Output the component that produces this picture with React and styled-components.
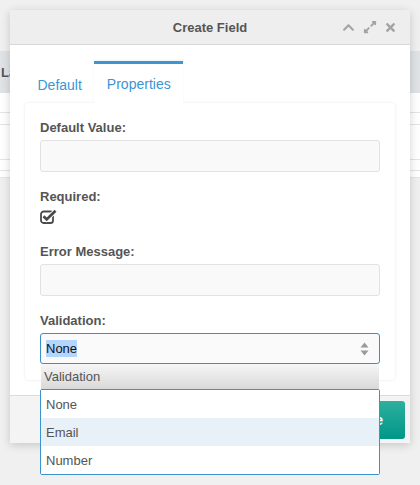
import React from 'react';
import styled, { createGlobalStyle } from 'styled-components';
import { FaChevronUp, FaExpandAlt, FaTimes } from 'react-icons/fa';

const Global = createGlobalStyle`
  html, body { margin: 0; padding: 0; background: #f0f0f0; }
  body { font-family: "Liberation Sans", Arial, Helvetica, sans-serif; color: #555; }
  #root { position: relative; width: 420px; height: 485px; overflow: hidden; }
`;

const Page = styled.div`
  padding-top: 51px;
`;

const Table = styled.div`
  width: 100%;
  background: #fff;
`;

const TableHead = styled.div`
  height: 42px;
  display: flex;
  align-items: center;
  padding-left: 1px;
  background: #dfe3e6;
  font-size: 13px;
  font-weight: bold;
  color: #555;
`;

const TableRow = styled.div`
  height: ${(p) => p.$h}px;
  border-bottom: 1px solid #e4e4e4;
  background: #fff;
`;

const Modal = styled.div`
  position: absolute;
  top: 10px;
  left: 10px;
  width: 400px;
  background: #fff;
  box-shadow: 0 2px 10px rgba(0, 0, 0, 0.18);
  border-radius: 2px;
`;

const Header = styled.div`
  height: 34px;
  display: grid;
  grid-template-columns: 1fr auto 1fr;
  align-items: center;
  background: #eeeeee;
  border-bottom: 1px solid #d8d8d8;
`;

const Title = styled.div`
  grid-column: 2;
  font-size: 13px;
  font-weight: bold;
  color: #555;
`;

const Controls = styled.div`
  grid-column: 3;
  justify-self: end;
  display: flex;
  align-items: center;
  padding-right: 9px;
`;

const IconBtn = styled.span`
  width: 21px;
  height: 20px;
  display: flex;
  align-items: center;
  justify-content: center;
  color: #a3a3a3;
`;

const Body = styled.div`
  padding: 16px 15px 15px;
`;

const Tabs = styled.div`
  display: flex;
  height: 42px;
  position: relative;
  z-index: 1;
`;

const Tab = styled.div`
  padding: ${(p) => (p.$active ? '0' : '2px')} 12.5px 0;
  display: flex;
  align-items: center;
  font-size: 14px;
  color: #3b96d2;
  border-top: 3px solid ${(p) => (p.$active ? '#3b96d2' : 'transparent')};
  background: ${(p) => (p.$active ? '#fff' : 'transparent')};
  box-shadow: ${(p) => (p.$active ? '0 -1px 2px rgba(0,0,0,0.06)' : 'none')};
`;

const Panel = styled.div`
  background: #fff;
  border-radius: 4px;
  box-shadow: 0 0 3px rgba(0, 0, 0, 0.1);
  padding: 16px 15px 16px;
`;

const Label = styled.div`
  height: 18px;
  line-height: 18px;
  font-size: 13px;
  font-weight: bold;
  color: #555;
  margin-bottom: ${(p) => (p.$tight ? 0 : 3)}px;
`;

const Input = styled.div`
  height: 32px;
  box-sizing: border-box;
  background: #f9f9f9;
  border: 1px solid #e2e2e2;
  border-radius: 3px;
  margin-bottom: 16px;
`;

const CheckRow = styled.div`
  height: 21px;
  display: flex;
  align-items: center;
  margin-bottom: 16px;
`;

const SelectWrap = styled.div`
  position: relative;
`;

const Select = styled.div`
  height: 31px;
  box-sizing: border-box;
  border: 1px solid #3c8ec8;
  border-radius: 3px;
  background: #fafafa;
  display: flex;
  align-items: center;
  justify-content: space-between;
  padding: 0 10px 0 5px;
  font-size: 13px;
  color: #111;
`;

const Selected = styled.span`
  background: #b4d6fd;
  padding: 1px 0;
`;

const DropHead = styled.div`
  position: absolute;
  top: 31px;
  left: 1px;
  right: 1px;
  height: 25px;
  box-sizing: border-box;
  padding-left: 3px;
  display: flex;
  align-items: center;
  font-size: 13px;
  color: #555;
  background: linear-gradient(#f6f6f6, #d9d9d9);
  z-index: 3;
`;

const DropList = styled.div`
  position: absolute;
  top: 56px;
  left: 0;
  right: 0;
  border: 1px solid #3c93cc;
  border-radius: 2px;
  background: #fff;
  z-index: 3;
`;

const Option = styled.div`
  height: 28px;
  display: flex;
  align-items: center;
  padding-left: 5px;
  font-size: 13px;
  color: #555;
  background: ${(p) => (p.$hover ? '#e8f0f8' : '#fff')};
`;

const Footer = styled.div`
  height: 48px;
  box-sizing: border-box;
  border-top: 1px solid #dcdcdc;
  background: #f4f4f4;
  display: flex;
  justify-content: flex-end;
  align-items: center;
  padding: 0 5px;
`;

const Button = styled.div`
  height: 38px;
  padding: 0 22px;
  display: flex;
  align-items: center;
  border-radius: 3px;
  background: linear-gradient(#2db09c, #00968a);
  color: #fff;
  font-size: 14px;
  font-weight: bold;
`;

const CheckIcon = () => (
  <svg width="17" height="15" viewBox="0 0 17 15">
    <rect x="1" y="2.5" width="12" height="11.5" rx="2.6" fill="none" stroke="#4a4a4a" strokeWidth="1.8" />
    <path d="M3.5 7.3 L6.7 10.4 L15.5 1.8" fill="none" stroke="#fff" strokeWidth="4.6" />
    <path d="M3.5 7.3 L6.7 10.4 L15.5 1.8" fill="none" stroke="#4a4a4a" strokeWidth="2.8" />
  </svg>
);

const SortArrows = () => (
  <svg width="9" height="16" viewBox="0 0 9 16">
    <path d="M0.5 6.5 L4.5 1.5 L8.5 6.5 Z" fill="#9a9a9a" />
    <path d="M0.5 9.5 L4.5 14.5 L8.5 9.5 Z" fill="#9a9a9a" />
  </svg>
);

const rows = [19, 11, 34, 10, 6];
const options = ['None', 'Email', 'Number'];

export default function App() {
  return (
    <>
      <Global />
      <Page>
        <Table>
          <TableHead>Label</TableHead>
          {rows.map((h, i) => (
            <TableRow key={i} $h={h} />
          ))}
        </Table>
      </Page>
      <Modal>
        <Header>
          <Title>Create Field</Title>
          <Controls>
            <IconBtn><FaChevronUp size={13} /></IconBtn>
            <IconBtn><FaExpandAlt size={14} /></IconBtn>
            <IconBtn><FaTimes size={13} /></IconBtn>
          </Controls>
        </Header>
        <Body>
          <Tabs>
            <Tab>Default</Tab>
            <Tab $active>Properties</Tab>
          </Tabs>
          <Panel>
            <Label>Default Value:</Label>
            <Input />
            <Label $tight>Required:</Label>
            <CheckRow><CheckIcon /></CheckRow>
            <Label>Error Message:</Label>
            <Input />
            <Label>Validation:</Label>
            <SelectWrap>
              <Select>
                <Selected>None</Selected>
                <SortArrows />
              </Select>
              <DropHead>Validation</DropHead>
              <DropList>
                {options.map((o) => (
                  <Option key={o} $hover={o === 'Email'}>{o}</Option>
                ))}
              </DropList>
            </SelectWrap>
          </Panel>
        </Body>
        <Footer>
          <Button>Create</Button>
        </Footer>
      </Modal>
    </>
  );
}
